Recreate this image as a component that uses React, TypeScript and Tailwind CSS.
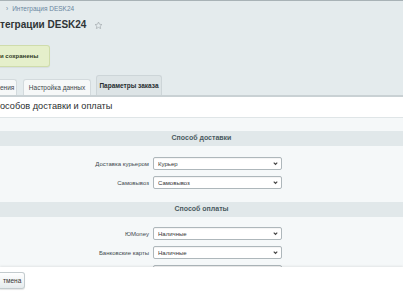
import React from "react";

// Rows for the two select blocks
interface Row {
  label: string;
  value: string;
}

const deliveryRows: Row[] = [
  { label: "Доставка курьером", value: "Курьер" },
  { label: "Самовывоз", value: "Самовывоз" },
];

const paymentRows: Row[] = [
  { label: "ЮMoney", value: "Наличные" },
  { label: "Банковские карты", value: "Наличные" },
  { label: "Терминалы", value: "Наличные" },
];

const SelectRow: React.FC<{ row: Row }> = ({ row }) => (
  <div className="flex items-center h-[13px]">
    <div className="w-[153px] pr-[4px] text-right text-[6px] leading-none text-[#3f4a4e] whitespace-nowrap">
      {row.label}
    </div>
    <div className="relative w-[129px] h-[13px]">
      <select
        defaultValue={row.value}
        className="block appearance-none w-full h-[13px] p-0 pl-[4px] bg-white border border-[#aeb7bb] rounded-[2px] text-[6px] leading-none text-[#333] shadow-[inset_0_1px_1px_rgba(0,0,0,0.05)]"
      >
        <option>{row.value}</option>
      </select>
      <svg
        className="absolute right-[4px] top-[4px] w-[5px] h-[5px] pointer-events-none"
        viewBox="0 0 10 10"
        fill="none"
        stroke="#444"
        strokeWidth="2.2"
      >
        <path d="M1.5 3.2 L5 6.8 L8.5 3.2" />
      </svg>
    </div>
  </div>
);

const SectionBand: React.FC<{ title: string }> = ({ title }) => (
  <div className="h-[15px] bg-[#e1e8ea] flex items-center justify-center text-[7px] font-bold text-[#4a5a60]">
    {title}
  </div>
);

const App: React.FC = () => {
  return (
    <div className="relative w-[403px] h-[294px] overflow-hidden bg-[#e4ebed] border-t border-[#a8b2b6] font-['Liberation_Sans',Arial,sans-serif]">
      {/* Breadcrumb */}
      <div className="flex items-center h-[7px] mt-[4px] pl-[6px] text-[6.5px] text-[#6a86a0]">
        <span>›</span>
        <span className="ml-[4px]">Интеграция DESK24</span>
      </div>

      {/* Title */}
      <div className="flex items-center h-[14px] mt-[6px]">
        <h1 className="text-[10px] font-bold text-[#2f3436] leading-none whitespace-nowrap">
          теграции DESK24
        </h1>
        <svg
          className="ml-[8px] w-[9px] h-[9px]"
          viewBox="0 0 24 24"
          fill="none"
          stroke="#a7aeb1"
          strokeWidth="2"
          strokeLinejoin="round"
        >
          <path d="M12 2.8 L14.8 8.7 L21.2 9.4 L16.4 13.8 L17.7 20.2 L12 17 L6.3 20.2 L7.6 13.8 L2.8 9.4 L9.2 8.7 Z" />
        </svg>
      </div>

      {/* Success message */}
      <div className="mt-[13px] w-[50px] h-[22px] bg-[#e5efcb] border border-l-0 border-[#cfdcab] rounded-r-[3px] flex items-center text-[6px] font-bold text-[#2f3a1e] whitespace-nowrap shadow-[0_1px_1px_rgba(0,0,0,0.06)]">
        и сохранены
      </div>

      {/* Tabs */}
      <div className="flex items-end mt-[8px] h-[20px]">
        <div className="w-[17px] h-[16px] bg-[#f6f8f8] border border-l-0 border-b-0 border-[#d3dadd] rounded-tr-[3px] flex items-center text-[6.5px] text-[#3d474b] whitespace-nowrap">
          ения
        </div>
        <div className="ml-[6px] w-[68px] h-[16px] bg-[#f6f8f8] border border-b-0 border-[#d3dadd] rounded-t-[3px] flex items-center justify-center text-[6.5px] text-[#3d474b] whitespace-nowrap">
          Настройка данных
        </div>
        <div className="ml-[5px] w-[66px] h-[20px] bg-[#dde4e6] border border-b-0 border-[#cdd5d8] rounded-t-[3px] flex items-center justify-center text-[6.5px] font-bold text-[#262c2e] whitespace-nowrap">
          Параметры заказа
        </div>
      </div>

      {/* Panel header */}
      <div className="border-t-2 border-[#c9d1d4] bg-white h-[23px] flex items-center border-b border-b-[#dfe5e7]">
        <span className="text-[9.2px] text-[#2b2f31] whitespace-nowrap">
          особов доставки и оплаты
        </span>
      </div>

      {/* Content */}
      <div className="bg-[#f5f8f9] h-[200px] pt-[13px]">
        <SectionBand title="Способ доставки" />
        <div className="flex flex-col gap-[6px] mt-[11px]">
          {deliveryRows.map((r) => (
            <SelectRow key={r.label} row={r} />
          ))}
        </div>
        <div className="mt-[13px]">
          <SectionBand title="Способ оплаты" />
        </div>
        <div className="flex flex-col gap-[6px] mt-[10px]">
          {paymentRows.map((r) => (
            <SelectRow key={r.label} row={r} />
          ))}
        </div>
      </div>

      {/* Fixed footer */}
      <div className="absolute left-0 right-0 bottom-0 h-[27px] bg-white shadow-[0_-1px_2px_rgba(0,0,0,0.08)] flex items-center">
        <div className="h-[17px] px-[3px] flex items-center bg-gradient-to-b from-white to-[#e6ebed] border border-l-0 border-[#c3cbce] rounded-r-[3px] text-[6.5px] text-[#333] shadow-[0_1px_1px_rgba(0,0,0,0.1)]">
          тмена
        </div>
      </div>
    </div>
  );
};

export default App;
